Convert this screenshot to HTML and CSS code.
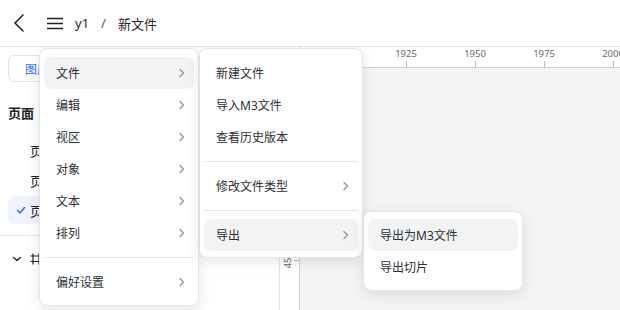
FILE: index.html
```html
<!DOCTYPE html>
<html lang="zh-CN">
<head>
    <meta charset="UTF-8">
    <meta name="viewport" content="width=device-width, initial-scale=1.0">
    <title>新文件</title>
    <link rel="stylesheet" href="styles.css">
</head>
<body>

<div class="app">
    <header class="topbar">
        <svg class="back-icon" width="20" height="20" viewBox="0 0 20 20">
            <path d="M14 2 L6 10 L14 18" fill="none" stroke="#1f2329" stroke-width="1.6" stroke-linecap="round" stroke-linejoin="round"/>
        </svg>
        <svg class="menu-icon" width="20" height="20" viewBox="0 0 20 20">
            <path d="M2 5.5 H18 M2 10.5 H18 M2 15.5 H18" fill="none" stroke="#1f2329" stroke-width="1.4"/>
        </svg>
        <span class="crumb">y1</span>
        <span class="crumb-sep">/</span>
        <span class="crumb">新文件</span>
    </header>

    <div class="workspace">
        <aside class="sidebar">
            <div class="sidebar-top">
                <div class="tabs">
                    <div class="tab active">图层</div>
                    <div class="tab">资源</div>
                </div>
                <div class="section-title">页面</div>
                <div class="page-list">
                    <div class="page-row"><span class="check"></span>页面 1</div>
                    <div class="page-row"><span class="check"></span>页面 2</div>
                    <div class="page-row selected">
                        <span class="check">
                            <svg width="14" height="14" viewBox="0 0 14 14">
                                <path d="M1.5 7.5 L4 10 L8.5 4.5" fill="none" stroke="#3370ff" stroke-width="1.6" stroke-linecap="round" stroke-linejoin="round"/>
                            </svg>
                        </span>页面 3
                    </div>
                </div>
            </div>
            <div class="layer-row">
                <svg width="10" height="10" viewBox="0 0 10 10">
                    <path d="M1.5 3.5 L5 6.5 L8.5 3.5" fill="none" stroke="#1f2329" stroke-width="1.4" stroke-linecap="round" stroke-linejoin="round"/>
                </svg>
                <svg class="frame-icon" width="12" height="12" viewBox="0 0 12 12">
                    <path d="M3 0.5 V11.5 M9 0.5 V11.5 M0.5 3 H11.5 M0.5 8.5 H11.5" fill="none" stroke="#1f2329" stroke-width="1.2"/>
                </svg>
                <span>画板 1</span>
            </div>
        </aside>

        <div class="stage">
            <div class="ruler-corner"></div>
            <div class="ruler-h">
                <div class="mark"><span>1900</span><i></i></div>
                <div class="mark"><span>1925</span><i></i></div>
                <div class="mark"><span>1950</span><i></i></div>
                <div class="mark"><span>1975</span><i></i></div>
                <div class="mark"><span>2000</span><i></i></div>
            </div>
            <div class="ruler-v">
                <div class="vmark"><span>400</span><i></i></div>
                <div class="vmark"><span>425</span><i></i></div>
                <div class="vmark"><span>450</span><i></i></div>
                <div class="vmark"><span>475</span><i></i></div>
            </div>
            <div class="canvas"></div>
        </div>
    </div>

    <!-- main menu -->
    <div class="menu menu-main">
        <div class="menu-item hover">文件<svg class="chev" width="12" height="12" viewBox="0 0 12 12"><path d="M6 2.5 L9.5 6 L6 9.5"/></svg></div>
        <div class="menu-item">编辑<svg class="chev" width="12" height="12" viewBox="0 0 12 12"><path d="M6 2.5 L9.5 6 L6 9.5"/></svg></div>
        <div class="menu-item">视区<svg class="chev" width="12" height="12" viewBox="0 0 12 12"><path d="M6 2.5 L9.5 6 L6 9.5"/></svg></div>
        <div class="menu-item">对象<svg class="chev" width="12" height="12" viewBox="0 0 12 12"><path d="M6 2.5 L9.5 6 L6 9.5"/></svg></div>
        <div class="menu-item">文本<svg class="chev" width="12" height="12" viewBox="0 0 12 12"><path d="M6 2.5 L9.5 6 L6 9.5"/></svg></div>
        <div class="menu-item">排列<svg class="chev" width="12" height="12" viewBox="0 0 12 12"><path d="M6 2.5 L9.5 6 L6 9.5"/></svg></div>
        <div class="menu-divider"></div>
        <div class="menu-item">偏好设置<svg class="chev" width="12" height="12" viewBox="0 0 12 12"><path d="M6 2.5 L9.5 6 L6 9.5"/></svg></div>
    </div>

    <!-- file submenu -->
    <div class="menu menu-file">
        <div class="menu-item">新建文件</div>
        <div class="menu-item">导入M3文件</div>
        <div class="menu-item">查看历史版本</div>
        <div class="menu-divider"></div>
        <div class="menu-item">修改文件类型<svg class="chev" width="12" height="12" viewBox="0 0 12 12"><path d="M6 2.5 L9.5 6 L6 9.5"/></svg></div>
        <div class="menu-divider"></div>
        <div class="menu-item hover">导出<svg class="chev" width="12" height="12" viewBox="0 0 12 12"><path d="M6 2.5 L9.5 6 L6 9.5"/></svg></div>
    </div>

    <!-- export submenu -->
    <div class="menu menu-export">
        <div class="menu-item hover">导出为M3文件</div>
        <div class="menu-item">导出切片</div>
    </div>
</div>

</body>
</html>
```

FILE: styles.css
```css
* {
    box-sizing: border-box;
}

body {
    margin: 0;
    font-family: "Noto Sans", "Noto Sans CJK SC", sans-serif;
    color: #1f2329;
    background-color: #fff;
}

.app {
    position: relative;
    width: 620px;
    height: 310px;
    overflow: hidden;
    display: flex;
    flex-direction: column;
}

/* top bar */
.topbar {
    height: 47px;
    flex-shrink: 0;
    display: flex;
    align-items: center;
    padding-left: 9px;
    border-bottom: 1px solid #e4e5e8;
    font-size: 13px;
}

.menu-icon {
    margin-left: 16px;
    margin-right: 10px;
}

.crumb-sep {
    margin: 0 12px;
    color: #4e5561;
}

/* workspace */
.workspace {
    flex: 1;
    display: flex;
    min-height: 0;
}

.sidebar {
    width: 280px;
    flex-shrink: 0;
    border-right: 1px solid #e4e5e8;
    background-color: #fff;
}

.sidebar-top {
    padding: 8px 8px 11px;
    border-bottom: 1px solid #e4e5e8;
}

.tabs {
    height: 27px;
    display: flex;
    border: 1px solid #e1e3e7;
    border-radius: 6px;
    padding: 2px;
}

.tab {
    flex: 1;
    display: flex;
    align-items: center;
    padding-left: 14px;
    font-size: 12px;
    color: #4e5561;
}

.tab.active {
    color: #3370ff;
}

.section-title {
    margin-top: 21px;
    line-height: 20px;
    font-size: 13px;
    font-weight: 700;
    color: #1f2329;
}

.page-list {
    margin-top: 13px;
    display: flex;
    flex-direction: column;
    gap: 2px;
}

.page-row {
    height: 28px;
    display: flex;
    align-items: center;
    padding-left: 8px;
    font-size: 13px;
    border-radius: 6px;
}

.page-row.selected {
    background-color: #eef3ff;
}

.check {
    width: 14px;
    height: 14px;
    display: flex;
}

.layer-row {
    height: 46px;
    display: flex;
    align-items: center;
    padding-left: 12px;
    gap: 8px;
    font-size: 13px;
}

/* canvas + rulers */
.stage {
    flex: 1;
    display: grid;
    grid-template-columns: 20px 1fr;
    grid-template-rows: 21px 1fr;
}

.ruler-corner {
    border-right: 1px solid #cfd1d6;
    border-bottom: 1px solid #cfd1d6;
}

.ruler-h {
    display: flex;
    padding-left: 2.5px;
    border-bottom: 1px solid #cfd1d6;
    overflow: hidden;
}

.mark {
    width: 69px;
    flex-shrink: 0;
    display: flex;
    flex-direction: column;
    align-items: center;
    justify-content: space-between;
}

.mark span {
    font-size: 9.5px;
    line-height: 12px;
    margin-top: 1px;
    color: #646a73;
}

.mark i {
    width: 1px;
    height: 6px;
    background-color: #b8bbc2;
}

.ruler-v {
    display: flex;
    flex-direction: column;
    padding-top: 19.5px;
    border-right: 1px solid #cfd1d6;
    overflow: hidden;
}

.vmark {
    height: 69px;
    flex-shrink: 0;
    display: flex;
    align-items: center;
    justify-content: space-between;
}

.vmark span {
    writing-mode: vertical-rl;
    transform: rotate(180deg);
    font-size: 9.5px;
    line-height: 12px;
    margin-left: 2px;
    color: #646a73;
}

.vmark i {
    width: 6px;
    height: 1px;
    background-color: #b8bbc2;
}

.canvas {
    background-color: #f4f4f4;
}

/* menus */
.menu {
    position: absolute;
    background-color: #fff;
    border: 1px solid #e4e5e8;
    border-radius: 8px;
    box-shadow: 0 4px 14px rgba(0, 0, 0, 0.1);
    padding: 8px 4px 7px;
    z-index: 10;
}

.menu-main {
    left: 39px;
    top: 48px;
    width: 160px;
}

.menu-file {
    left: 199px;
    top: 48px;
    width: 164px;
    padding-bottom: 6px;
}

.menu-export {
    left: 363px;
    top: 211px;
    width: 160px;
    padding-top: 7px;
}

.menu-item {
    height: 32px;
    display: flex;
    align-items: center;
    justify-content: space-between;
    padding: 0 8px 0 12px;
    border-radius: 8px;
    font-size: 12px;
    color: #2b2f36;
}

.menu-item.hover {
    background-color: #f2f3f5;
}

.chev path {
    fill: none;
    stroke: #8f959e;
    stroke-width: 1.3;
    stroke-linecap: round;
    stroke-linejoin: round;
}

.menu-divider {
    height: 1px;
    margin: 8px 0;
    background-color: #e4e5e8;
}
```
